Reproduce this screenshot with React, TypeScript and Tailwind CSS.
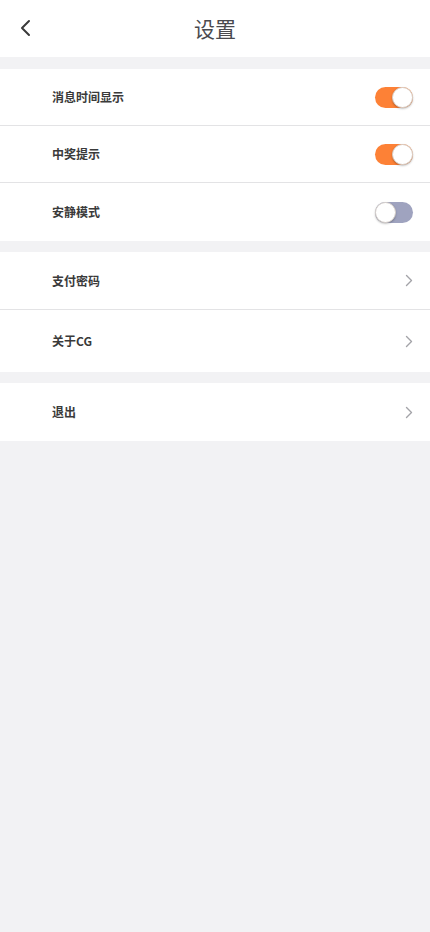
import React from 'react';

const Toggle = ({ on }: { on: boolean }) => (
  <div
    className={`relative h-[21px] w-[38px] rounded-full ${on ? 'bg-[#fd8136]' : 'bg-[#9fa3bf]'}`}
  >
    <div
      className={`absolute top-0 h-[21px] w-[21px] rounded-full border border-[#d9d2cc] bg-white shadow-[0_1px_2px_rgba(0,0,0,0.25)] ${on ? 'right-0' : 'left-0'}`}
    />
  </div>
);

const Chevron = () => (
  <svg width="8" height="13" viewBox="0 0 8 13" fill="none">
    <path d="M1.5 1.5L6.5 6.5L1.5 11.5" stroke="#a3a3a8" strokeWidth="1.4" strokeLinecap="round" strokeLinejoin="round" />
  </svg>
);

const Row = ({
  label,
  right,
  h,
  last,
}: {
  label: string;
  right: React.ReactNode;
  h: string;
  last?: boolean;
}) => (
  <div className={`flex items-center justify-between pl-[52px] pr-[17px] ${h} ${last ? '' : 'border-b border-[#e3e3e5]'}`}>
    <span className="text-[12px] font-semibold text-[#3a3a3a]">{label}</span>
    {right}
  </div>
);

export default function App() {
  return (
    <div
      className="min-h-[932px] w-full bg-[#f2f2f4]"
      style={{ fontFamily: '"Noto Sans CJK SC", "Noto Sans", sans-serif' }}
    >
      {/* Header */}
      <div className="relative flex h-[57px] items-center justify-center bg-white">
        <svg className="absolute left-[19px] top-[19px]" width="12" height="18" viewBox="0 0 12 18" fill="none">
          <path d="M10 2L3 9L10 16" stroke="#3a3a3a" strokeWidth="2" strokeLinecap="round" strokeLinejoin="round" />
        </svg>
        <span className="text-[21px] text-[#4a4a4f]">设置</span>
      </div>

      <div className="mt-[12px] bg-white">
        <Row label="消息时间显示" h="h-[57px]" right={<Toggle on />} />
        <Row label="中奖提示" h="h-[57px]" right={<Toggle on />} />
        <Row label="安静模式" h="h-[58px]" last right={<Toggle on={false} />} />
      </div>

      <div className="mt-[11px] bg-white">
        <Row label="支付密码" h="h-[58px]" right={<Chevron />} />
        <Row label="关于CG" h="h-[62px]" last right={<Chevron />} />
      </div>

      <div className="mt-[11px] bg-white">
        <Row label="退出" h="h-[58px]" last right={<Chevron />} />
      </div>
    </div>
  );
}
